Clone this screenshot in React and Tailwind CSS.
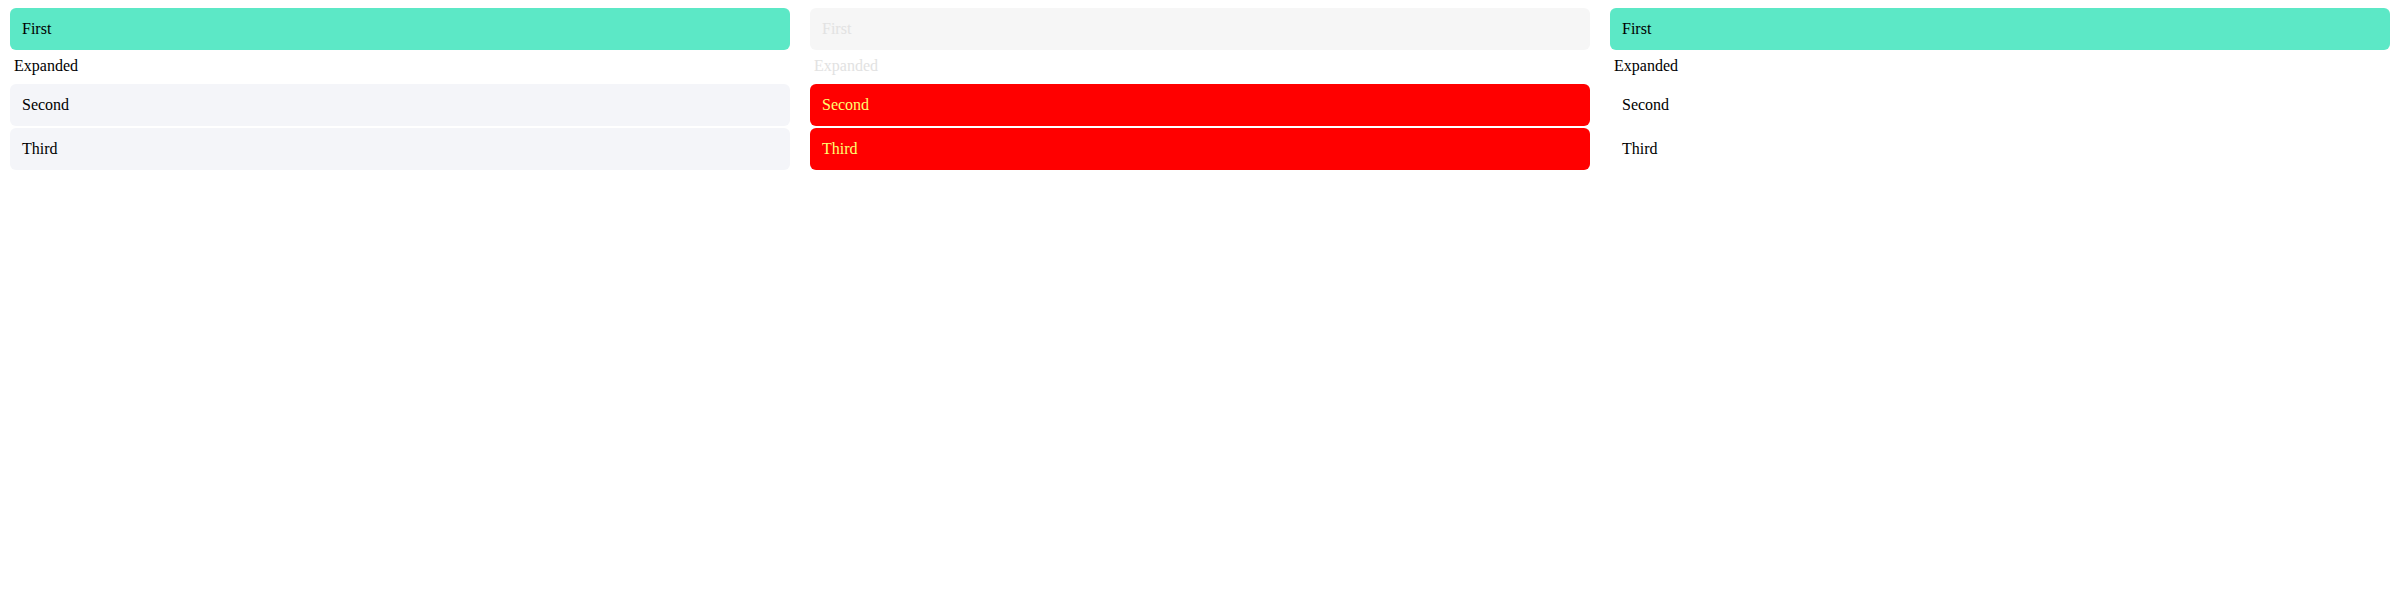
import React, { useState } from 'react';

const items = [
  { id: 'first', title: 'First', content: 'Expanded' },
  { id: 'second', title: 'Second', content: 'Expanded' },
  { id: 'third', title: 'Third', content: 'Expanded' },
];

function Accordion({ variant }) {
  const [open, setOpen] = useState('first');

  const headerClass = (isOpen) => {
    if (variant === 'danger') {
      return isOpen ? 'bg-[#f6f6f6] text-[#e2e2e2]' : 'bg-[#ff0000] text-[#ffff70]';
    }
    if (variant === 'plain') {
      return isOpen ? 'bg-[#5ce8c6] text-black' : 'bg-transparent text-black';
    }
    return isOpen ? 'bg-[#5ce8c6] text-black' : 'bg-[#f4f5f9] text-black';
  };

  return (
    <div className="flex flex-col">
      {items.map((it, i) => {
        const isOpen = open === it.id;
        const prevOpen = i > 0 && open === items[i - 1].id;
        return (
          <div key={it.id} className={i > 0 && !prevOpen ? 'mt-[2px]' : ''}>
            <button
              onClick={() => setOpen(isOpen ? null : it.id)}
              className={`w-full text-left rounded-[6px] px-3 py-3 leading-[18px] text-base ${headerClass(isOpen)}`}
            >
              {it.title}
            </button>
            {isOpen && (
              <div className={`px-1 pt-[7px] pb-[9px] leading-[18px] text-base ${variant === 'danger' ? 'text-[#e2e2e2]' : 'text-black'}`}>
                {it.content}
              </div>
            )}
          </div>
        );
      })}
    </div>
  );
}

export default function App() {
  return (
    <div className="bg-white min-h-[600px] font-['Liberation_Serif','Times_New_Roman',serif]">
      <div className="grid grid-cols-3 gap-5 p-[10px] pt-2">
        <Accordion variant="default" />
        <Accordion variant="danger" />
        <Accordion variant="plain" />
      </div>
    </div>
  );
}
